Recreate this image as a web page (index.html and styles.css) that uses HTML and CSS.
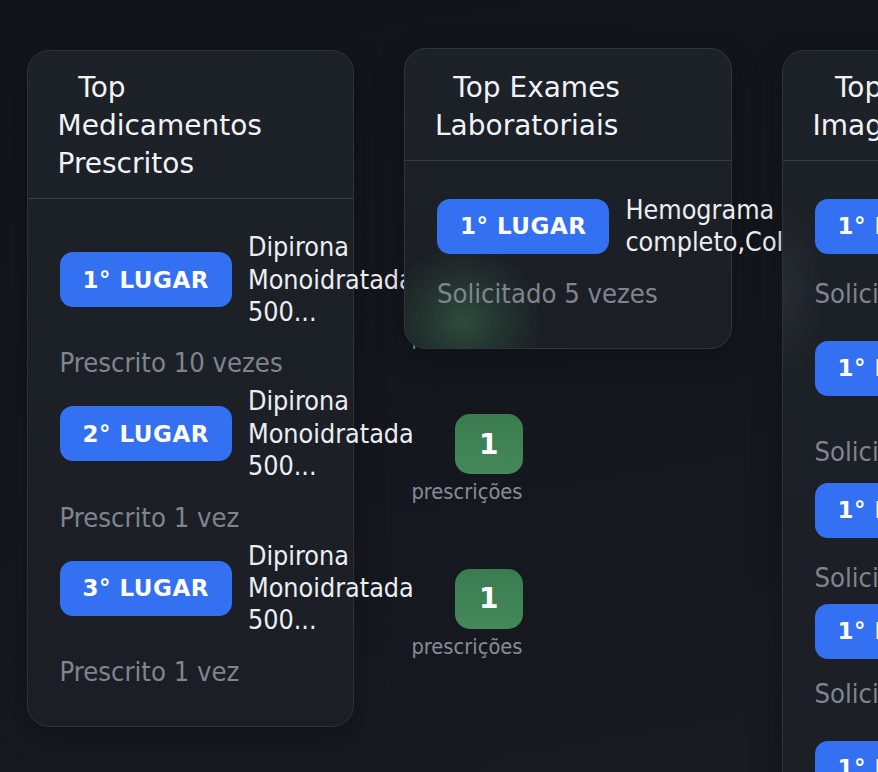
FILE: index.html
```html
<!DOCTYPE html>
<html lang="pt-BR">
<head>
<meta charset="utf-8">
<title>Rankings</title>
<link rel="stylesheet" href="styles.css">
</head>
<body>
<main class="board">
  <section class="card card-meds">
    <header class="card-head">
      <h2 class="card-title"><span class="ico ico-a" aria-hidden="true"></span>Top Medicamentos Prescritos</h2>
    </header>
    <div class="card-body">
      <ul class="list">
        <li class="item">
          <div class="row">
            <span class="rank">1° LUGAR</span>
            <span class="name">Dipirona Monoidratada 500...</span>
            <div class="count"><span class="count-num">10</span><span class="count-label">prescrições</span></div>
          </div>
          <p class="sub">Prescrito 10 vezes</p>
        </li>
        <li class="item">
          <div class="row">
            <span class="rank">2° LUGAR</span>
            <span class="name">Dipirona Monoidratada 500...</span>
            <div class="count"><span class="count-num">1</span><span class="count-label">prescrições</span></div>
          </div>
          <p class="sub">Prescrito 1 vez</p>
        </li>
        <li class="item">
          <div class="row">
            <span class="rank">3° LUGAR</span>
            <span class="name">Dipirona Monoidratada 500...</span>
            <div class="count"><span class="count-num">1</span><span class="count-label">prescrições</span></div>
          </div>
          <p class="sub">Prescrito 1 vez</p>
        </li>
      </ul>
    </div>
  </section>

  <section class="card card-lab">
    <header class="card-head">
      <h2 class="card-title"><span class="ico ico-b" aria-hidden="true"></span>Top Exames Laboratoriais</h2>
    </header>
    <div class="card-body">
      <ul class="list">
        <li class="item">
          <div class="row">
            <span class="rank">1° LUGAR</span>
            <span class="name">Hemograma completo,Colest...</span>
          </div>
          <p class="sub">Solicitado 5 vezes</p>
        </li>
      </ul>
    </div>
  </section>

  <section class="card card-img">
    <header class="card-head">
      <h2 class="card-title"><span class="ico ico-c" aria-hidden="true"></span>Top Exames de Imagem</h2>
    </header>
    <div class="card-body">
      <ul class="list list-loose">
        <li class="item">
          <div class="row">
            <span class="rank">1° LUGAR</span>
            <span class="name">Radiografia de tórax</span>
          </div>
          <p class="sub">Solicitado 3 vezes</p>
        </li>
        <li class="item">
          <div class="row">
            <span class="rank">1° LUGAR</span>
            <span class="name">Ressonância magnética de...</span>
          </div>
          <p class="sub">Solicitado 3 vezes</p>
        </li>
        <li class="item">
          <div class="row">
            <span class="rank">1° LUGAR</span>
            <span class="name">Ultrassonografia de abdome</span>
          </div>
          <p class="sub">Solicitado 3 vezes</p>
        </li>
        <li class="item">
          <div class="row">
            <span class="rank">1° LUGAR</span>
            <span class="name">Eletrocardiograma</span>
          </div>
          <p class="sub">Solicitado 3 vezes</p>
        </li>
        <li class="item">
          <div class="row">
            <span class="rank">1° LUGAR</span>
            <span class="name">Tomografia computadorizada de...</span>
          </div>
          <p class="sub">Solicitado 3 vezes</p>
        </li>
      </ul>
    </div>
  </section>
</main>
</body>
</html>
```
FILE: styles.css
```css
html, body {
  margin: 0;
  height: 100%;
  overflow: hidden;
}

body {
  background: linear-gradient(170deg, #111419 0%, #14171d 55%, #171a20 100%);
  color: #eef0f3;
  font-family: "DejaVu Sans Condensed", "DejaVu Sans", sans-serif;
}

.board {
  display: flex;
  align-items: flex-start;
  gap: 50px;
  padding: 49.5px 0 0 26.5px;
}

.card {
  position: relative;
  z-index: 1;
  flex: 0 0 327.5px;
  min-width: 0;
  box-sizing: border-box;
  border: 1px solid #2c313a;
  border-radius: 22px;
  background: linear-gradient(180deg, #1d2128 0%, #1b1f25 100%);
  box-shadow: 0 10px 30px rgba(0, 0, 0, 0.25);
}

.card-lab {
  z-index: 2;
  margin-top: -1.7px;
  border-color: #30353e;
  background:
    radial-gradient(ellipse 80px 75px at 58px 272px, rgba(70, 140, 92, 0.42) 0%, rgba(70, 140, 92, 0.18) 50%, rgba(70, 140, 92, 0) 100%),
    linear-gradient(180deg, #1d2128 0%, #1b1f25 100%);
}

.card-img {
  z-index: 3;
  background:
    radial-gradient(ellipse 40px 90px at 0 240px, rgba(255, 255, 255, 0.05) 0%, rgba(255, 255, 255, 0) 100%),
    linear-gradient(180deg, #1d2128 0%, #1b1f25 100%);
}

.card-head {
  padding: 18px 30px 15px;
  border-bottom: 1px solid #383e48;
}

.card-lab .card-head {
  padding-top: 19.7px;
}

.card-title {
  margin: 0;
  font-family: "DejaVu Sans", sans-serif;
  font-weight: 400;
  font-size: 28px;
  line-height: 38.2px;
  color: #f1f3f6;
}

.ico {
  display: inline-block;
  height: 1px;
}
.ico-a { width: 20.8px; }
.ico-b { width: 18.3px; }
.ico-c { width: 22.5px; }

.card-body {
  padding: 33px 32px 37px;
}

.card-meds .card-body {
  padding: 32px 32px 38px;
}

.card-lab .card-body {
  padding-bottom: 38px;
}

.list {
  list-style: none;
  margin: 0;
  padding: 0;
  display: flex;
  flex-direction: column;
  gap: 6px;
}

.list-loose {
  gap: 10px;
}

.item {
  display: flex;
  flex-direction: column;
}

.row {
  display: flex;
  align-items: center;
  gap: 16px;
}

.rank {
  flex: 0 0 auto;
  display: flex;
  align-items: center;
  justify-content: center;
  height: 55px;
  padding: 0 23px;
  border-radius: 13px;
  background: #3370f2;
  color: #ffffff;
  font-family: "DejaVu Sans", sans-serif;
  font-weight: 700;
  font-size: 23px;
  letter-spacing: 0.5px;
  white-space: nowrap;
}

.name {
  flex: 0 0 147.5px;
  min-width: 0;
  font-size: 26.7px;
  line-height: 32.4px;
  color: #eceef2;
}

.count {
  flex: 0 0 auto;
  align-self: flex-start;
  display: flex;
  flex-direction: column;
  align-items: flex-end;
  margin: 29px 0 -29px;
}

.count-num {
  display: flex;
  align-items: center;
  justify-content: center;
  height: 60px;
  padding: 0 24px;
  border-radius: 15px;
  background: linear-gradient(180deg, #3b7b50 0%, #44895a 100%);
  color: #ffffff;
  font-family: "DejaVu Sans", sans-serif;
  font-weight: 700;
  font-size: 28px;
}

.count-label {
  margin-top: 5px;
  font-size: 21.7px;
  color: #878d96;
}

.sub {
  margin: 19px 0 0;
  font-size: 27.2px;
  line-height: 32px;
  color: #7f858e;
}
```
